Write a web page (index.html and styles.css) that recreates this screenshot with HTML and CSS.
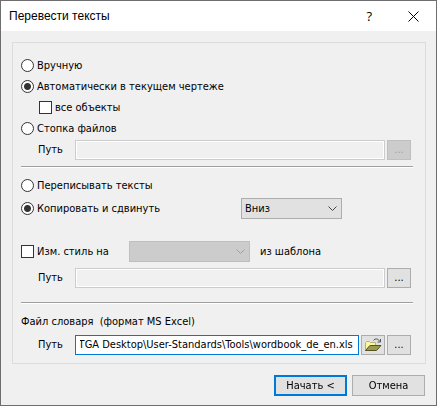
FILE: index.html
```html
<!DOCTYPE html>
<html lang="ru">
<head>
  <meta charset="UTF-8">
  <title>Перевести тексты</title>
  <link rel="stylesheet" href="styles.css">
</head>
<body>
  <form class="dialog">
    <header class="titlebar">
      <h1>Перевести тексты</h1>
      <button type="button" class="help" aria-label="Справка">?</button>
      <button type="button" class="close" aria-label="Закрыть">
        <svg width="11" height="11" viewBox="0 0 11 11"><path d="M.5 .5l10 10M10.5 .5l-10 10" stroke="#000" fill="none"/></svg>
      </button>
    </header>

    <main class="group">
      <section class="source">
        <label class="option"><input type="radio" name="source">Вручную</label>
        <label class="option"><input type="radio" name="source" checked>Автоматически в текущем чертеже</label>
        <label class="option indent"><input type="checkbox">все объекты</label>
        <label class="option"><input type="radio" name="source">Стопка файлов</label>
        <div class="path">
          <label for="stack-path">Путь</label>
          <input type="text" id="stack-path" disabled>
          <button type="button" disabled>...</button>
        </div>
      </section>

      <section class="mode">
        <label class="option"><input type="radio" name="mode">Переписывать тексты</label>
        <div class="shift">
          <label class="option"><input type="radio" name="mode" checked>Копировать и сдвинуть</label>
          <select aria-label="Направление сдвига">
            <option>Вниз</option>
            <option>Вверх</option>
          </select>
        </div>
        <div class="style">
          <label class="option"><input type="checkbox">Изм. стиль на</label>
          <select aria-label="Стиль" disabled></select>
          <span>из шаблона</span>
        </div>
        <div class="path">
          <label for="template-path">Путь</label>
          <input type="text" id="template-path" disabled>
          <button type="button">...</button>
        </div>
      </section>

      <section class="wordbook">
        <h2>Файл словаря&nbsp; (формат MS Excel)</h2>
        <div class="path">
          <label for="wordbook-path">Путь</label>
          <input type="text" id="wordbook-path" value="C:\TGA Desktop\User-Standards\Tools\wordbook_de_en.xls">
          <button type="button" class="open" aria-label="Открыть">
            <svg width="17" height="14" viewBox="0 0 17 14">
              <path d="M.5 12.500V4.500L1.500 3.500H4.500L5.500 4.500H10.500V7.500H5z" fill="#fbf7a0" stroke="#b5b27a"/>
              <path d="M.5 12.500L5 7.500H16L11.500 12.500z" fill="#9c9a4c" stroke="#55532a"/>
              <path d="M8.500 2.500L10 1H12.500L15 3.500M15.500 1V4H12.500" fill="none" stroke="#555"/>
            </svg>
          </button>
          <button type="button">...</button>
        </div>
      </section>
    </main>

    <footer class="actions">
      <button type="submit" class="default">Начать &lt;</button>
      <button type="button">Отмена</button>
    </footer>
  </form>

  <script>
    // Курсор в конец пути к словарю
    const field = document.getElementById("wordbook-path");
    field.focus();
    field.setSelectionRange(field.value.length, field.value.length);
    field.scrollLeft = field.scrollWidth;
  </script>
</body>
</html>
```
FILE: styles.css
```css
* {
  box-sizing: border-box;
}
body {
  margin: 0;
  font: 11px "DejaVu Sans Condensed", "DejaVu Sans", sans-serif;
  color: #000;
}
.dialog {
  background: #f0f0f0;
  border: 1px solid #6e6e70;
  min-height: 100vh;
}

/* Заголовок окна */
.titlebar {
  display: flex;
  align-items: center;
  height: 30px;
  padding: 0 17px 0 8px;
  background: #fff;
}
.titlebar h1 {
  flex: 1;
  margin: 0;
  font: 12px "Liberation Sans", sans-serif;
}
.titlebar button {
  display: flex;
  padding: 0;
  border: none;
  background: none;
}
.titlebar .help {
  margin-right: 36px;
  font: 13px "Open Sans", sans-serif;
}

/* Рамка с параметрами */
.group {
  margin: 11px 10px 0 11px;
  padding: 12px 12px 8px 8px;
  border: 1px solid #dcdcdc;
}
.source, .mode {
  border-bottom: 1px solid #a0a0a0;
  box-shadow: 0 1px #fff;
}
.source {
  padding-bottom: 6px;
}
.mode {
  padding: 8px 0 14px;
}
.wordbook {
  padding-top: 12px;
}
.wordbook h2 {
  margin: 0 0 6px;
  font-size: 11px;
  font-weight: normal;
  line-height: 14px;
}
.option {
  display: flex;
  align-items: center;
  gap: 3px;
  height: 21px;
}
.indent {
  padding-left: 18px;
}
.option input {
  appearance: none;
  flex: none;
  width: 13px;
  height: 13px;
  margin: 0;
  border: 1px solid #333;
  background: #fff;
}
.option input[type="radio"] {
  border-radius: 50%;
}
.option input[type="radio"]:checked {
  background: radial-gradient(circle, #333 3px, #fff 4px);
}

.path {
  display: flex;
  gap: 2px;
  padding: 0 2px 0 17px;
  line-height: 20px;
}
.source .path {
  margin-top: 1px;
}
.mode .path {
  margin-top: 6px;
}
.path label {
  width: 35px;
}
.path input {
  flex: 1;
  min-width: 0;
  height: 20px;
  padding: 0 5px 0 4px;
  border: 1px solid #7a7a7a;
  font: inherit;
  outline: none;
}
.path input:focus {
  border-color: #0078d7;
}
.path input:disabled {
  border-color: #ccc;
  background: #f0f0f0;
  box-shadow: inset 0 0 0 1px #fff;
}
.path button {
  display: flex;
  align-items: center;
  justify-content: center;
  width: 24px;
  height: 20px;
  padding: 0;
}

button {
  border: 1px solid #adadad;
  background: #e1e1e1;
  color: #000;
  font: inherit;
}
button:disabled {
  border-color: #bfbfbf;
  background: #ccc;
  color: #a0a0a0;
}

select {
  appearance: none;
  height: 21px;
  padding: 0 20px 0 3px;
  border: 1px solid #adadad;
  background: #e1e1e1 url("data:image/svg+xml,%3Csvg xmlns='http://www.w3.org/2000/svg' width='9' height='6'%3E%3Cpath d='M.5 .5l4 4 4-4' fill='none' stroke='%23444'/%3E%3C/svg%3E") no-repeat right 4px center;
  color: #000;
  font: inherit;
}
select:disabled {
  border-color: #bfbfbf;
  background: #ccc url("data:image/svg+xml,%3Csvg xmlns='http://www.w3.org/2000/svg' width='9' height='6'%3E%3Cpath d='M.5 .5l4 4 4-4' fill='none' stroke='%23a0a0a0'/%3E%3C/svg%3E") no-repeat right 4px center;
  opacity: 1;
}
.shift {
  display: grid;
  grid-template-columns: 220px 101px;
  margin-top: 2px;
}
.style {
  display: grid;
  grid-template-columns: 108px 121px auto;
  align-items: center;
  margin-top: 22px;
}
.style span {
  padding-left: 10px;
}

.actions {
  display: flex;
  justify-content: flex-end;
  gap: 5px;
  padding: 11px 11px 9px;
}
.actions button {
  width: 73px;
  height: 21px;
  padding: 0;
}
.actions .default {
  border: 2px solid #0078d7;
}
```
